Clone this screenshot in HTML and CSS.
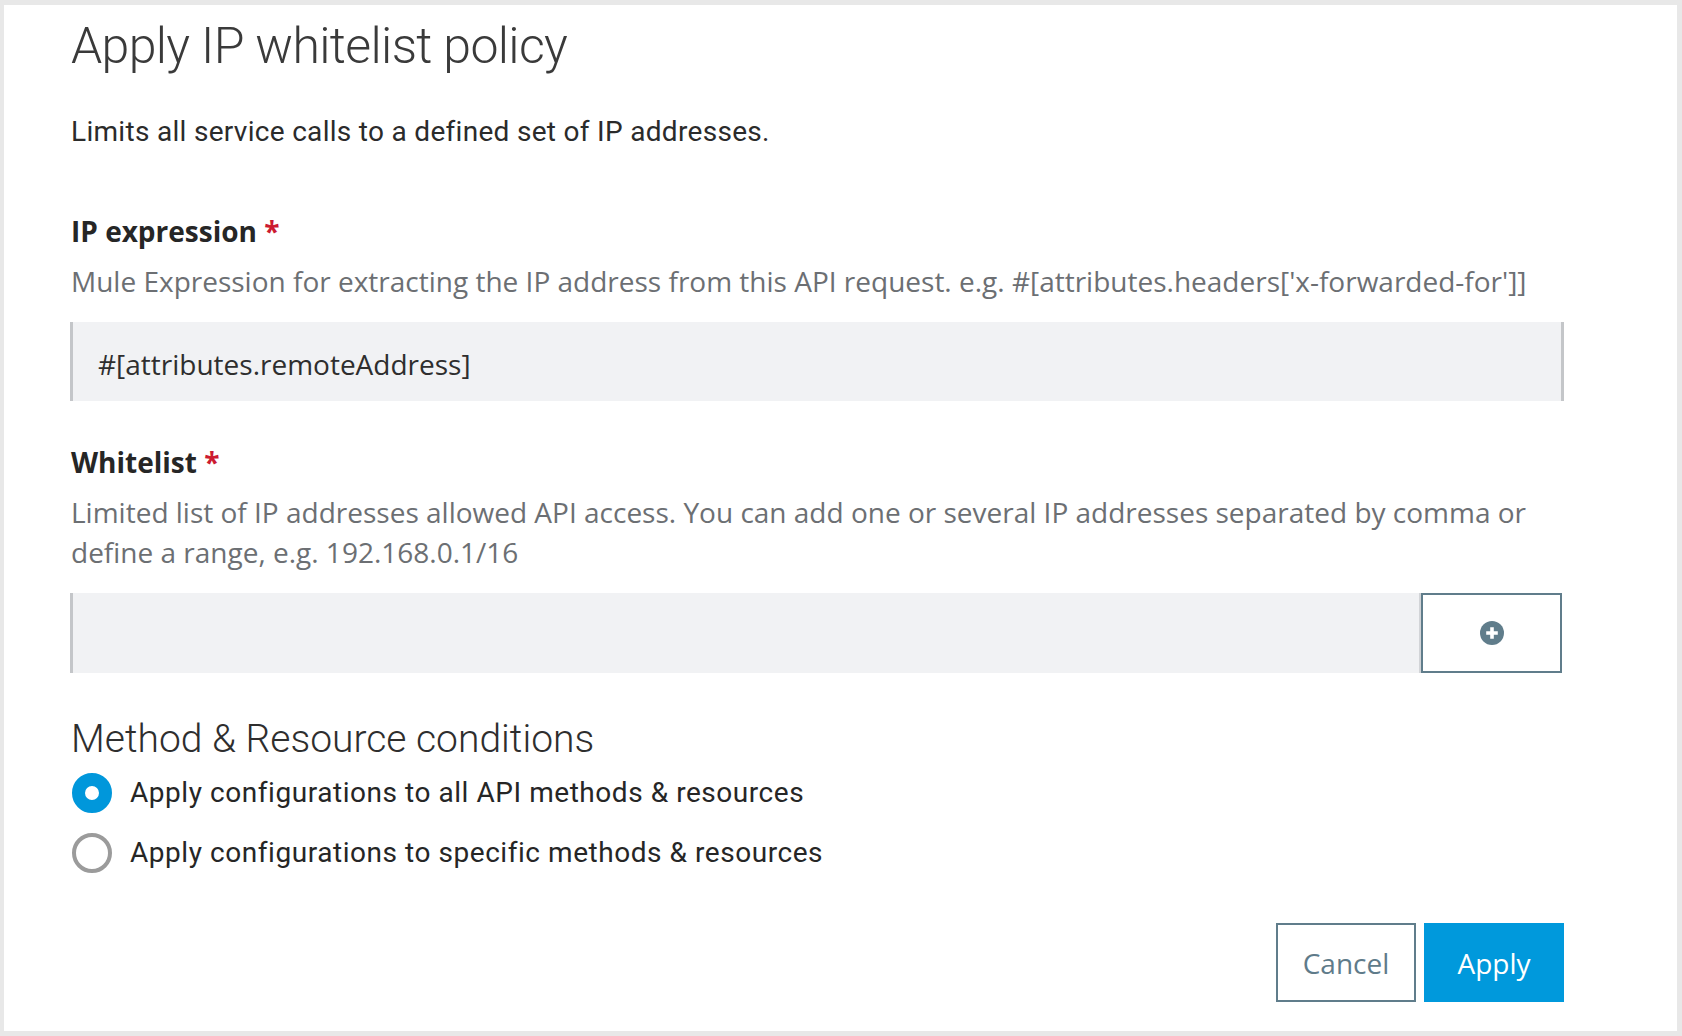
FILE: index.html
```html
<!DOCTYPE html>
<html lang="en">
<head>
<meta charset="utf-8">
<title>Apply IP whitelist policy</title>
<link rel="stylesheet" href="styles.css">
</head>
<body>
<div class="panel">
  <h1 class="title">Apply IP whitelist policy</h1>
  <p class="desc">Limits all service calls to a defined set of IP addresses.</p>

  <div class="field">
    <div class="label">IP expression <span class="req">*</span></div>
    <div class="help">Mule Expression for extracting the IP address from this API request. e.g. #[attributes.headers['x-forwarded-for']]</div>
    <div class="input input-full">#[attributes.remoteAddress]</div>
  </div>

  <div class="field field-2">
    <div class="label">Whitelist <span class="req">*</span></div>
    <div class="help">Limited list of IP addresses allowed API access. You can add one or several IP addresses separated by comma or<br>define a range, e.g. 192.168.0.1/16</div>
    <div class="input-row">
      <div class="input input-grow"></div>
      <button class="add-btn" type="button" aria-label="Add">
        <svg width="24" height="24" viewBox="0 0 24 24" aria-hidden="true">
          <circle cx="12" cy="12" r="12" fill="#607d8b"/>
          <path d="M12 6.2v11.6M6.2 12h11.6" stroke="#fff" stroke-width="3.6" stroke-linecap="butt"/>
        </svg>
      </button>
    </div>
  </div>

  <h2 class="section">Method &amp; Resource conditions</h2>
  <div class="radios">
    <div class="radio-row">
      <span class="radio radio-on"></span>
      <span class="radio-text">Apply configurations to all API methods &amp; resources</span>
    </div>
    <div class="radio-row">
      <span class="radio"></span>
      <span class="radio-text">Apply configurations to specific methods &amp; resources</span>
    </div>
  </div>

  <div class="actions">
    <button class="btn btn-cancel" type="button">Cancel</button>
    <button class="btn btn-apply" type="button">Apply</button>
  </div>
</div>
</body>
</html>
```

FILE: styles.css
```css
* { box-sizing: border-box; }

html, body {
  margin: 0;
  padding: 0;
  background: #e8e8e8;
}

body {
  width: 1682px;
  height: 1036px;
  padding: 5px 5px 5px 4px;
  font-family: "Open Sans", "Liberation Sans", sans-serif;
}

.panel {
  background: #ffffff;
  height: 1026px;
  padding: 11px 113px 0 67px;
  display: flex;
  flex-direction: column;
}

.title {
  margin: 0;
  font-family: Roboto, "Liberation Sans", sans-serif;
  font-weight: 300;
  font-size: 50px;
  line-height: 60px;
  letter-spacing: -0.65px;
  color: #3a3a3a;
}

.desc {
  margin: 38px 0 0;
  font-family: Roboto, "Liberation Sans", sans-serif;
  font-weight: 400;
  font-size: 28px;
  line-height: 36px;
  letter-spacing: 0.3px;
  color: #2b2b2b;
}

.field { margin-top: 63px; }
.field-2 { margin-top: 43px; }

.label {
  font-family: "Open Sans", sans-serif;
  font-weight: 700;
  font-size: 28px;
  line-height: 36px;
  color: #262626;
}

.req { color: #cc1b31; }

.help {
  margin-top: 12px;
  font-family: "Open Sans", sans-serif;
  font-size: 28px;
  line-height: 40px;
  color: #6c6f73;
  white-space: nowrap;
}

.input {
  margin-top: 21px;
  height: 79px;
  background: #f1f2f4;
  border-left: 3px solid #c4c6c9;
  font-family: "Open Sans", sans-serif;
  font-size: 28px;
  line-height: 40px;
  color: #2e2e2e;
}

.input-full {
  margin-left: -1px;
  border-right: 3px solid #c4c6c9;
  padding: 22px 0 0 25px;
}

.input-row {
  margin-top: 21px;
  margin-left: -1px;
  display: flex;
  height: 80px;
  width: 1492px;
}

.input-grow {
  margin-top: 0;
  height: 80px;
  flex: 1;
  border-right: 2px solid #d2d4d7;
}

.add-btn {
  width: 141px;
  height: 80px;
  border: 2px solid #607d8b;
  background: #ffffff;
  padding: 0;
  margin: 0;
  display: flex;
  align-items: center;
  justify-content: center;
}

.add-btn svg { display: block; }

.section {
  margin: 42px 0 0;
  font-family: Roboto, "Liberation Sans", sans-serif;
  font-weight: 300;
  font-size: 39px;
  line-height: 48px;
  letter-spacing: 0;
  color: #2e2e2e;
}

.radios {
  margin-top: 10px;
  display: flex;
  flex-direction: column;
  gap: 20px;
}

.radio-row {
  display: flex;
  align-items: center;
  gap: 18px;
  height: 40px;
}

.radio {
  width: 40px;
  height: 40px;
  border-radius: 50%;
  border: 4px solid #9b9b9b;
  background: #ffffff;
  flex: none;
  margin-left: 1px;
}

.radio-on {
  border: 13px solid #0097db;
  background: #ffffff;
}

.radio-text {
  font-family: Roboto, "Liberation Sans", sans-serif;
  font-weight: 400;
  font-size: 28px;
  line-height: 36px;
  letter-spacing: 0.55px;
  color: #262626;
}

.actions {
  margin-top: 50px;
  display: flex;
  justify-content: flex-end;
  gap: 8px;
}

.btn {
  width: 140px;
  height: 79px;
  margin: 0;
  padding: 0;
  font-family: "Open Sans", sans-serif;
  font-size: 28px;
  line-height: 36px;
  cursor: pointer;
}

.btn-cancel {
  background: #ffffff;
  border: 2px solid #607d8b;
  color: #5f7b8a;
}

.btn-apply {
  background: #0099dc;
  border: none;
  color: #ffffff;
}
```
